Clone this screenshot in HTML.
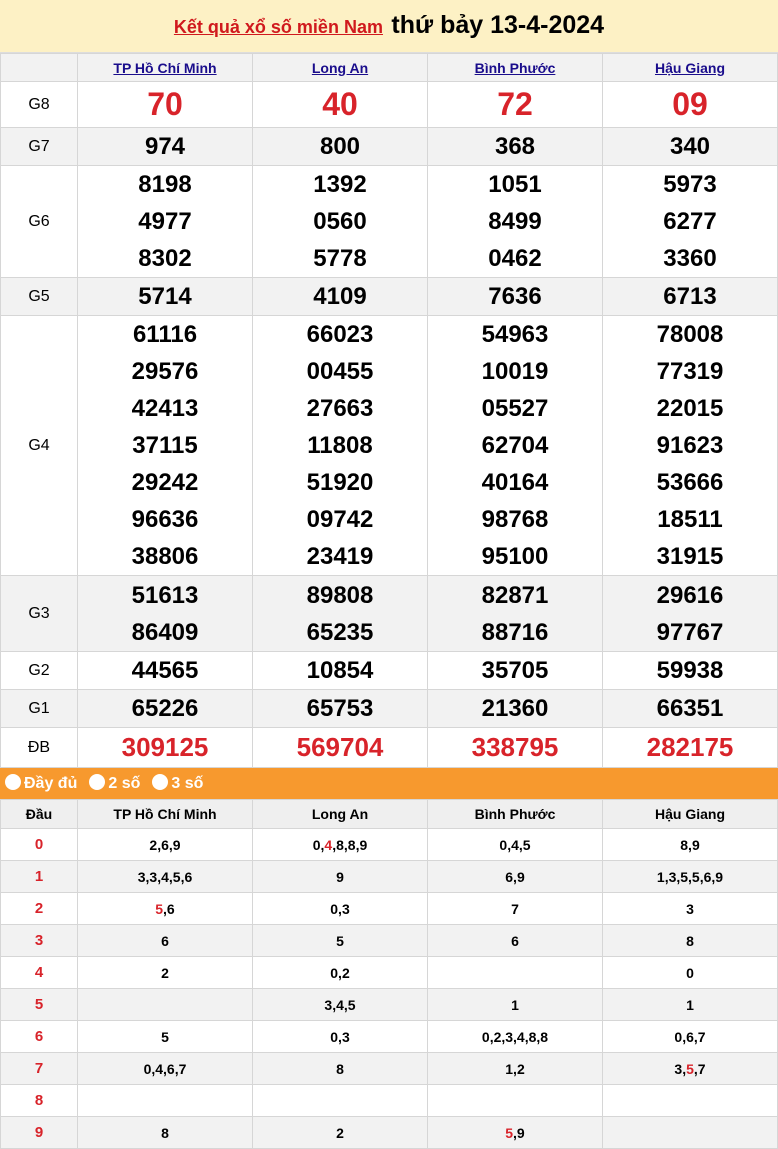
<!DOCTYPE html>
<html><head><meta charset="utf-8"><style>
*{margin:0;padding:0;box-sizing:border-box}
body{width:778px;height:1148px;overflow:hidden;background:#fff;font-family:"Liberation Sans",Arial,sans-serif;color:#000}
.hd{height:53px;background:#fdf1c5;text-align:center;line-height:50px;border-bottom:1px solid #ddd}
.hd a{color:#d0191d;font-weight:bold;font-size:18px;text-decoration:underline}
.hd b{font-size:25px;margin-left:4px}
table{border-collapse:collapse;width:778px;table-layout:fixed}
td{border:1px solid #d6d6d6;text-align:center;padding:0;vertical-align:middle}
col.a{width:77px}col.b{width:175px}
.g td:first-child{font-size:16px}
.g .n{font-weight:bold;font-size:24px;line-height:37px}
.gr{background:#f2f2f2}
.pv td{font-size:14px;font-weight:bold}
.pv a{color:#1a0d8c;text-decoration:underline}
.r{color:#d8232a}
.g8 .n{font-size:32px;color:#d8232a}
.db .n{font-size:26px;color:#d8232a}
.bar{height:31px;background:#f7992e;color:#fff;font-weight:bold;font-size:16px;line-height:31px;padding-left:5px}
.bar span{display:inline-block;width:16px;height:16px;background:#fff;border-radius:50%;vertical-align:-2px;margin-right:3px}
.bar i{font-style:normal;margin-right:12px}
.t td{height:32px;font-size:14px;font-weight:bold;line-height:16px}
.t td:first-child{color:#d8232a;font-size:15px}
.t tr.h td{background:#efefef;color:#000;font-size:14px;height:29px}
</style></head><body>
<div class="hd"><a>Kết quả xổ số miền Nam</a> <b>thứ bảy 13-4-2024</b></div>
<table class="g"><colgroup><col class="a"><col class="b"><col class="b"><col class="b"><col></colgroup>
<tr class="pv gr" style="height:28px"><td></td><td><a>TP Hồ Chí Minh</a></td><td><a>Long An</a></td><td><a>Bình Phước</a></td><td><a>Hậu Giang</a></td></tr>
<tr class="g8" style="height:46px"><td>G8</td><td class="n">70</td><td class="n">40</td><td class="n">72</td><td class="n">09</td></tr>
<tr class="gr" style="height:38px"><td>G7</td><td class="n">974</td><td class="n">800</td><td class="n">368</td><td class="n">340</td></tr>
<tr style="height:112px"><td>G6</td><td class="n">8198<br>4977<br>8302</td><td class="n">1392<br>0560<br>5778</td><td class="n">1051<br>8499<br>0462</td><td class="n">5973<br>6277<br>3360</td></tr>
<tr class="gr" style="height:38px"><td>G5</td><td class="n">5714</td><td class="n">4109</td><td class="n">7636</td><td class="n">6713</td></tr>
<tr style="height:260px"><td>G4</td><td class="n">61116<br>29576<br>42413<br>37115<br>29242<br>96636<br>38806</td><td class="n">66023<br>00455<br>27663<br>11808<br>51920<br>09742<br>23419</td><td class="n">54963<br>10019<br>05527<br>62704<br>40164<br>98768<br>95100</td><td class="n">78008<br>77319<br>22015<br>91623<br>53666<br>18511<br>31915</td></tr>
<tr class="gr" style="height:76px"><td>G3</td><td class="n">51613<br>86409</td><td class="n">89808<br>65235</td><td class="n">82871<br>88716</td><td class="n">29616<br>97767</td></tr>
<tr style="height:38px"><td>G2</td><td class="n">44565</td><td class="n">10854</td><td class="n">35705</td><td class="n">59938</td></tr>
<tr class="gr" style="height:38px"><td>G1</td><td class="n">65226</td><td class="n">65753</td><td class="n">21360</td><td class="n">66351</td></tr>
<tr class="db" style="height:40px"><td>ĐB</td><td class="n">309125</td><td class="n">569704</td><td class="n">338795</td><td class="n">282175</td></tr>
</table>
<div class="bar"><span></span><i>Đầy đủ</i><span></span><i>2 số</i><span></span><i>3 số</i></div>
<table class="t"><colgroup><col class="a"><col class="b"><col class="b"><col class="b"><col></colgroup>
<tr class="h"><td>Đầu</td><td>TP Hồ Chí Minh</td><td>Long An</td><td>Bình Phước</td><td>Hậu Giang</td></tr>
<tr><td>0</td><td>2,6,9</td><td>0,<span class="r">4</span>,8,8,9</td><td>0,4,5</td><td>8,9</td></tr>
<tr class="gr"><td>1</td><td>3,3,4,5,6</td><td>9</td><td>6,9</td><td>1,3,5,5,6,9</td></tr>
<tr><td>2</td><td><span class="r">5</span>,6</td><td>0,3</td><td>7</td><td>3</td></tr>
<tr class="gr"><td>3</td><td>6</td><td>5</td><td>6</td><td>8</td></tr>
<tr><td>4</td><td>2</td><td>0,2</td><td></td><td>0</td></tr>
<tr class="gr"><td>5</td><td></td><td>3,4,5</td><td>1</td><td>1</td></tr>
<tr><td>6</td><td>5</td><td>0,3</td><td>0,2,3,4,8,8</td><td>0,6,7</td></tr>
<tr class="gr"><td>7</td><td>0,4,6,7</td><td>8</td><td>1,2</td><td>3,<span class="r">5</span>,7</td></tr>
<tr><td>8</td><td></td><td></td><td></td><td></td></tr>
<tr class="gr"><td>9</td><td>8</td><td>2</td><td><span class="r">5</span>,9</td><td></td></tr>
</table>
</body></html>
